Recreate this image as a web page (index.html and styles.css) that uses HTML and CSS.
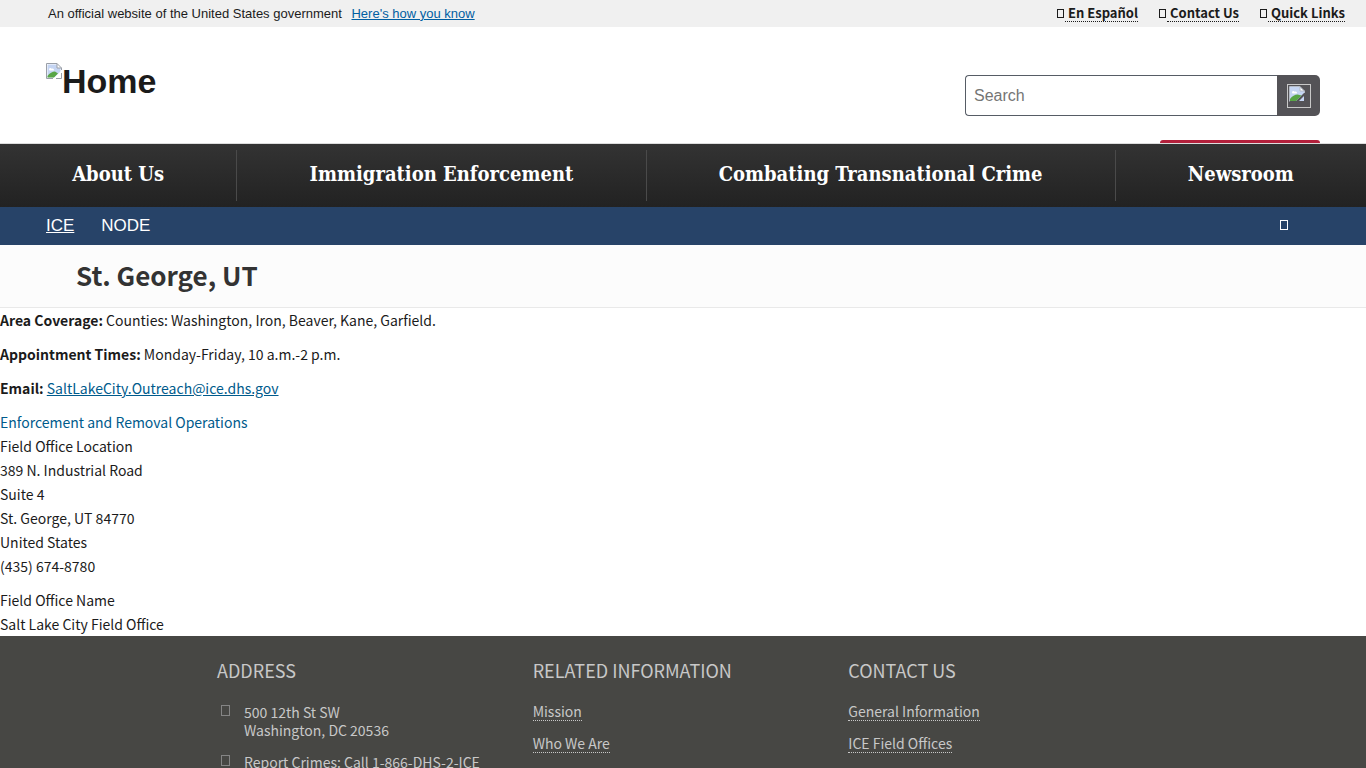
FILE: index.html
```html
<!DOCTYPE html>
<html lang="en">
<head>
<meta charset="utf-8">
<title>St. George, UT | ICE</title>
<link rel="stylesheet" href="styles.css">
</head>
<body>
<svg class="defs" aria-hidden="true">
  <symbol id="missing-image" viewBox="0 0 16 16">
    <path d="M.5.5H11L15.5 5V15.5H.5z" fill="#fff"/>
    <path d="M1.500 1.500H11V5H14.500V9L9 14.500H1.500z" fill="#c5d5f3"/>
    <path d="M3 6.500c0-1.500 2-2 2.500-.8C7 5 8.500 6 7.800 7.500H3.500z" fill="#fff"/>
    <path d="M1.500 14.500V13c2-3 5-4.500 7.500-4.500l3 2L8 14.500z" fill="#58a546"/>
    <path d="M16 7v2L9 16H7z" fill="#fff"/>
    <path d="M.5 15.500V.5H11L15.500 5V7M11 .5V5h4.500M.5 15.500H7M10 15.500h5.500V10" fill="none" stroke="#9a9fa8"/>
  </symbol>
  <symbol id="missing-image-dark" viewBox="0 0 16 16">
    <path d="M1 1H11L15 5V7L7 15H1z" fill="#c5d5f3"/>
    <path d="M11 1V5h4z" fill="#fff"/>
    <path d="M3 6.500c0-1.500 2-2 2.500-.8C7 5 8.500 6 7.800 7.500H3.500z" fill="#fff"/>
    <path d="M1 15V13c2-3 5-4.500 7.500-4.500l4 1L7 15z" fill="#58a546"/>
    <path d="M15 10v5h-5z" fill="#c5d5f3"/>
    <path d="M.5 15.500V.5H11L15.500 5V7M11 .5V5h4.500" fill="none" stroke="#b4bac4"/>
  </symbol>
</svg>
<div class="page">
  <div class="banner">
    <p class="banner-text">An official website of the United States government <a class="banner-link" href="#know">Here's how you know</a></p>
    <ul class="quick">
      <li><a class="quick-link" href="#es"><i class="glyph quick-glyph"></i><span class="dotted">&nbsp;En Español</span></a></li>
      <li><a class="quick-link" href="#contact"><i class="glyph quick-glyph"></i><span class="dotted">&nbsp;Contact Us</span></a></li>
      <li><a class="quick-link" href="#links"><i class="glyph quick-glyph"></i><span class="dotted">&nbsp;Quick Links</span></a></li>
    </ul>
  </div>
  <header class="header">
    <a class="logo" href="#home"><svg class="logo-icon"><use href="#missing-image"/></svg>Home</a>
    <div class="tools">
      <form class="search">
        <input class="search-input" type="search" placeholder="Search" aria-label="Search">
        <button class="search-button" type="button" aria-label="Search"><span class="search-frame"><svg class="search-icon"><use href="#missing-image-dark"/></svg></span></button>
      </form>
      <div class="report"></div>
    </div>
  </header>
  <nav class="nav">
    <a class="nav-link" href="#about">About Us</a>
    <a class="nav-link" href="#enforcement">Immigration Enforcement</a>
    <a class="nav-link" href="#crime">Combating Transnational Crime</a>
    <a class="nav-link" href="#news">Newsroom</a>
  </nav>
  <div class="crumbs">
    <a class="crumb-link" href="#ice">ICE</a>
    <span>NODE</span>
    <button class="share" type="button" aria-label="Share"><i class="glyph share-glyph"></i></button>
  </div>
  <div class="title"><h1 class="title-text">St. George, UT</h1></div>
  <main class="content">
    <p class="para"><b>Area Coverage:</b> Counties: Washington, Iron, Beaver, Kane, Garfield.</p>
    <p class="para"><b>Appointment Times:</b> Monday-Friday, 10 a.m.-2 p.m.</p>
    <p class="para"><b>Email:</b> <a class="mail" href="#mail">SaltLakeCity.Outreach@ice.dhs.gov</a></p>
    <div class="para">
      <div class="office">Enforcement and Removal Operations</div>
      <div>Field Office Location</div>
      <div>389 N. Industrial Road</div>
      <div>Suite 4</div>
      <div>St. George, UT 84770</div>
      <div>United States</div>
      <div>(435) 674-8780</div>
    </div>
    <div class="para">
      <div>Field Office Name</div>
      <div>Salt Lake City Field Office</div>
    </div>
  </main>
  <footer class="footer">
    <div class="footer-grid">
      <section>
        <h2 class="footer-title">Address</h2>
        <ul class="footer-list">
          <li class="contact"><i class="glyph footer-glyph"></i><span>500 12th St SW<br>Washington, DC 20536</span></li>
          <li class="contact"><i class="glyph footer-glyph"></i><span>Report Crimes: Call 1-866-DHS-2-ICE</span></li>
        </ul>
      </section>
      <section>
        <h2 class="footer-title">Related Information</h2>
        <ul class="footer-list">
          <li><a class="footer-link" href="#mission">Mission</a></li>
          <li><a class="footer-link" href="#who">Who We Are</a></li>
        </ul>
      </section>
      <section>
        <h2 class="footer-title">Contact Us</h2>
        <ul class="footer-list">
          <li><a class="footer-link" href="#general">General Information</a></li>
          <li><a class="footer-link" href="#offices">ICE Field Offices</a></li>
        </ul>
      </section>
    </div>
  </footer>
</div>
</body>
</html>
```
FILE: styles.css
```css
* { box-sizing: border-box; }
body {
  margin: 0;
  color: #1b1b1b;
  background: #fff;
  font: 14px/24px "Noto Sans CJK JP", "Open Sans", sans-serif;
}
p, ul, h1, h2 { margin: 0; padding: 0; }
ul { list-style: none; }
.defs { display: none; }
.page { display: flex; flex-direction: column; height: 100vh; overflow: hidden; }
.page > * { flex-shrink: 0; }
.glyph { display: inline-block; border: 1px solid currentColor; }

.banner {
  display: flex;
  justify-content: space-between;
  align-items: center;
  height: 27px;
  padding: 0 21px 0 48px;
  background: #f0f0f0;
}
.banner-text { font: 13px/16px "Liberation Sans", Arial, sans-serif; }
.banner-link { margin-left: 6px; color: #005ea2; }
.quick { display: flex; gap: 21px; font-size: 13px; font-weight: 700; line-height: 16px; }
.quick-link { color: inherit; text-decoration: none; }
.quick-glyph { width: 7px; height: 9px; margin-right: 1px; }
.dotted { border-bottom: 1px dotted currentColor; display: inline-block; }

.header {
  display: flex;
  justify-content: space-between;
  height: 117px;
  padding: 0 46px;
  border-bottom: 1px solid #ddd;
}
.logo {
  display: flex;
  align-items: flex-start;
  padding-top: 36px;
  color: #1b1b1b;
  font: 700 34px/36px "Liberation Sans", Arial, sans-serif;
  text-decoration: none;
}
.logo-icon { width: 16px; height: 16px; }
.tools { display: flex; flex-direction: column; justify-content: space-between; align-items: flex-end; padding-top: 48px; }
.search { display: flex; width: 355px; height: 41px; }
.search-input {
  flex: 1;
  min-width: 0;
  padding: 0 8px;
  border: 1px solid #565c65;
  border-right: 0;
  border-radius: 4px 0 0 4px;
  font: 16px/20px "Liberation Sans", Arial, sans-serif;
}
.search-input::placeholder { color: #757575; }
.search-button { display: grid; place-items: center; width: 43px; padding: 0; border: 0; border-radius: 0 5px 5px 0; background: #545357; }
.search-frame { width: 24px; height: 24px; padding: 1px; border: 1px solid #c8c8c8; }
.search-icon { display: block; width: 16px; height: 16px; }
.report { width: 160px; height: 3px; border-radius: 4px 4px 0 0; background: #b3203b; }

.nav { display: flex; height: 63px; padding: 6px 0; background: linear-gradient(#333, #222); }
.nav-link {
  flex: 1 1 auto;
  border-right: 1px solid #4a4a4a;
  color: #fff;
  font: 700 20px/36px "DejaVu Serif Condensed", "DejaVu Serif", serif;
  text-align: center;
  text-decoration: none;
  padding-top: 6px;
}
.nav-link:last-child { border-right: 0; }

.crumbs {
  display: flex;
  align-items: center;
  gap: 27px;
  height: 38px;
  padding: 0 78px 0 46px;
  color: #fff;
  background: #274368;
  font: 17px/20px "Liberation Sans", Arial, sans-serif;
}
.crumb-link { color: inherit; }
.share { display: flex; margin-left: auto; padding: 0 0 2px; border: 0; color: inherit; background: none; }
.share-glyph { width: 8px; height: 10px; }

.title { height: 63px; padding: 12px 76px; border-bottom: 1px solid #e9e9e9; background: #fcfcfc; }
.title-text { color: #333; font-size: 26px; line-height: 36px; }

.content { display: flex; flex-direction: column; gap: 10px; }
.mail, .office { color: #005b8c; }

.footer { padding-top: 20px; color: #c8c8c8; background: #474744; min-height: 160px; }
.footer-grid { display: grid; grid-template-columns: repeat(3, 1fr); gap: 15px; max-width: 962px; margin: 0 auto; padding: 0 15px; }
.footer-title { margin-bottom: 19px; font-size: 18px; font-weight: 400; line-height: 28px; text-transform: uppercase; }
.footer-list { display: flex; flex-direction: column; gap: 14px; line-height: 18px; }
.footer-list li { min-height: 18px; }
.footer-link { display: block; width: fit-content; color: inherit; line-height: 17px; text-decoration: none; border-bottom: 1px dotted currentColor; }
.contact { display: flex; }
.footer-glyph { flex: none; width: 9px; height: 11px; margin: 2px 14px 0 4px; border-color: #858585; }
```
